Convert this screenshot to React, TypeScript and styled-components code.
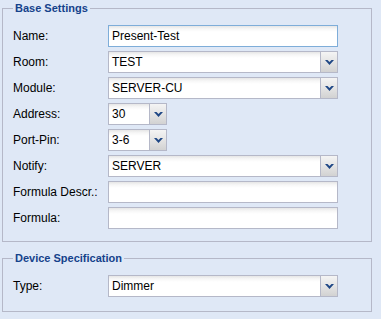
import React from "react";
import styled, { createGlobalStyle } from "styled-components";

const GlobalStyle = createGlobalStyle`
  html, body {
    margin: 0;
    padding: 0;
    background: #dfe8f6;
    font-family: "Liberation Sans", Arial, sans-serif;
  }
`;

const Page = styled.div`
  padding: 1px 9px 0 2px;
`;

const FieldSet = styled.fieldset<{ $padBottom: number }>`
  margin: 0 0 9px 0;
  padding: 0 10px ${(p) => p.$padBottom}px 10px;
  border: 1px solid #b5b8c8;
  min-width: 0;
`;

const Legend = styled.legend`
  padding: 0 2px;
  font-size: 11px;
  font-weight: bold;
  line-height: 14px;
  color: #15428b;
`;

const Rows = styled.div`
  display: flex;
  flex-direction: column;
  gap: 4px;
  padding-top: 10px;
`;

const Row = styled.div`
  display: grid;
  grid-template-columns: 95px auto;
  align-items: start;
  height: 22px;
`;

const Label = styled.label`
  font-size: 12px;
  line-height: 14px;
  padding-top: 4px;
  color: #000;
`;

const Box = styled.div<{ $width: number; $focused?: boolean }>`
  box-sizing: border-box;
  width: ${(p) => p.$width}px;
  height: 22px;
  border: 1px solid ${(p) => (p.$focused ? "#7eadd9" : "#b5b8c8")};
  background: linear-gradient(to bottom, #e6e6e6 0px, #f7f7f7 3px, #ffffff 6px);
  display: flex;
  align-items: stretch;
  font-size: 12px;
  color: #000;
`;

const Value = styled.span`
  flex: 1;
  padding: 1px 3px 0 3px;
  line-height: 19px;
  white-space: nowrap;
  overflow: hidden;
`;

const Trigger = styled.span`
  box-sizing: border-box;
  width: 17px;
  border-left: 1px solid #b5b8c8;
  background: linear-gradient(to bottom, #f4f4f4 0%, #e4e4e4 50%, #d2d2d2 100%);
  display: flex;
  align-items: center;
  justify-content: center;
`;

const Chevron = () => (
  <svg width="9" height="5" viewBox="0 0 9 5">
    <polygon points="0,0 2.5,0 4.5,2 6.5,0 9,0 4.5,5" fill="#1f4785" />
  </svg>
);

type Field =
  | { label: string; kind: "text"; value: string; width?: number; focused?: boolean }
  | { label: string; kind: "select"; value: string; width?: number };

const TextField = ({ value, width, focused }: { value: string; width: number; focused?: boolean }) => (
  <Box $width={width} $focused={focused}>
    <Value>{value}</Value>
  </Box>
);

const SelectField = ({ value, width }: { value: string; width: number }) => (
  <Box $width={width}>
    <Value>{value}</Value>
    <Trigger>
      <Chevron />
    </Trigger>
  </Box>
);

const base: Field[] = [
  { label: "Name:", kind: "text", value: "Present-Test", focused: true },
  { label: "Room:", kind: "select", value: "TEST" },
  { label: "Module:", kind: "select", value: "SERVER-CU" },
  { label: "Address:", kind: "select", value: "30", width: 59 },
  { label: "Port-Pin:", kind: "select", value: "3-6", width: 59 },
  { label: "Notify:", kind: "select", value: "SERVER" },
  { label: "Formula Descr.:", kind: "text", value: "" },
  { label: "Formula:", kind: "text", value: "" },
];

const device: Field[] = [{ label: "Type:", kind: "select", value: "Dimmer" }];

const renderRows = (fields: Field[]) =>
  fields.map((f) => (
    <Row key={f.label}>
      <Label>{f.label}</Label>
      {f.kind === "text" ? (
        <TextField value={f.value} width={f.width ?? 230} focused={f.focused} />
      ) : (
        <SelectField value={f.value} width={f.width ?? 230} />
      )}
    </Row>
  ));

export default function App() {
  return (
    <>
      <GlobalStyle />
      <Page>
        <FieldSet $padBottom={12}>
          <Legend>Base Settings</Legend>
          <Rows>{renderRows(base)}</Rows>
        </FieldSet>
        <FieldSet $padBottom={14}>
          <Legend>Device Specification</Legend>
          <Rows>{renderRows(device)}</Rows>
        </FieldSet>
      </Page>
    </>
  );
}
